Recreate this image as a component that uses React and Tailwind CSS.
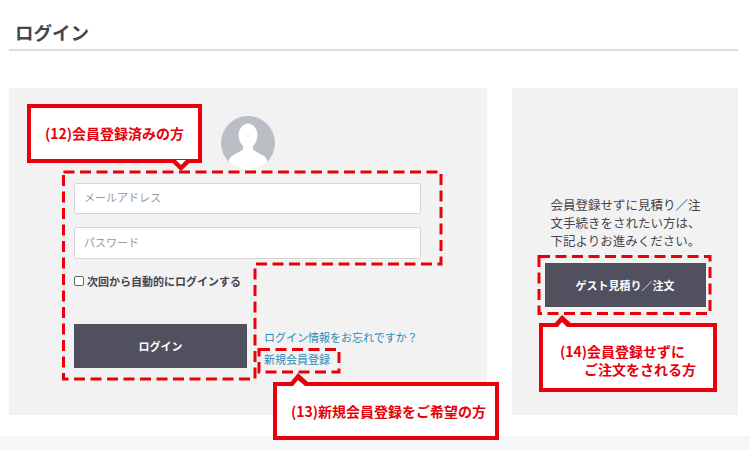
const font = { fontFamily: '"Noto Sans CJK JP", "Noto Sans", sans-serif' };

function Callout({ className, children }) {
  return (
    <div className={`absolute flex flex-col justify-center border-[4px] border-[#e8000b] bg-white text-[14px] font-bold text-[#e8000b] ${className}`}>
      {children}
    </div>
  );
}

export default function App() {
  return (
    <div className="relative h-[450px] w-[750px] overflow-hidden bg-white" style={font}>
      <div className="ml-[9px] flex h-[51px] w-[729px] items-end border-b-2 border-[#dddddd] pb-[4px] pl-[6px]">
        <h1 className="text-[18.5px] leading-[26px] font-bold text-[#45454f]">ログイン</h1>
      </div>

      <div className="mx-[9px] mt-[37px] flex h-[327px] gap-[25px]">
        <div className="flex w-[478px] flex-col bg-[#f2f2f2] pt-[28px] pl-[65px]">
          <div className="ml-[147px] flex h-[54px] w-[54px] items-center justify-center overflow-hidden rounded-full bg-[#b9bec5]">
            <svg viewBox="0 0 54 54" className="h-[54px] w-[54px]">
              <ellipse cx="27" cy="19.5" rx="9.500" ry="12" fill="#fff" />
              <path d="M22 28h10v5c2 3 7 4 11 7 3 2 4 5 4 14H7c0-9 1-12 4-14 4-3 9-4 11-7z" fill="#fff" />
            </svg>
          </div>
          <input readOnly placeholder="メールアドレス" className="mt-[13px] h-[31px] w-[347px] rounded-[3px] border border-[#d4d4d4] bg-white px-[9px] pb-[3px] text-[11px] outline-none placeholder:text-[#999999]" />
          <input readOnly placeholder="パスワード" className="mt-[13px] h-[32px] w-[347px] rounded-[3px] border border-[#d4d4d4] bg-white px-[9px] pb-[3px] text-[11px] outline-none placeholder:text-[#999999]" />
          <label className="mt-[12px] flex h-[20px] items-center gap-[3px] text-[11px] font-bold text-[#45454f]">
            <span className="h-[10px] w-[10px] rounded-[2px] border border-[#666666] bg-white" />
            次回から自動的にログインする
          </label>
          <div className="mt-[33px] flex items-end gap-[17px]">
            <button className="flex h-[44px] w-[173px] items-center justify-center bg-[#51505f] text-[11px] font-bold text-white">ログイン</button>
            <div className="flex flex-col gap-[4px] text-[11px] leading-[18px] text-[#2b8bb8]">
              <span>ログイン情報をお忘れですか？</span>
              <span>新規会員登録</span>
            </div>
          </div>
        </div>

        <div className="flex w-[226px] flex-col items-center bg-[#f2f2f2] pt-[108px]">
          <p className="w-[151px] translate-x-[1px] text-[12.5px] leading-[18px] text-[#45454f]">
            会員登録せずに見積り／注文手続きをされたい方は、下記よりお進みください。
          </p>
          <button className="mt-[13px] flex h-[44px] w-[161px] items-center justify-center bg-[#51505f] text-[11px] font-bold text-white">ゲスト見積り／注文</button>
        </div>
      </div>

      <div className="mt-[21px] h-[14px] bg-[#f4f6f7]" />

      <svg className="pointer-events-none absolute top-0 left-0" width="750" height="450" fill="none" stroke="#e8000b" strokeWidth="3" strokeDasharray="11 5.500">
        <path d="M63.5 172H441V264H255V379H63.5Z" />
        <path d="M259 349.5H339V372H259Z" />
        <path d="M539 256.500H710V313.500H539Z" />
      </svg>

      <Callout className="top-[104px] left-[27px] h-[59px] w-[175px] pl-[14px] leading-[23px]">(12)会員登録済みの方</Callout>
      <Callout className="top-[382px] left-[273px] h-[58px] w-[226px] pl-[14px] leading-[23px]">(13)新規会員登録をご希望の方</Callout>
      <Callout className="top-[323px] left-[539px] h-[69px] w-[178px] pt-[4px] pl-[17px] text-[13.8px] leading-[18px]">
        <span>(14)会員登録せずに</span>
        <span className="pl-[24px]">ご注文をされる方</span>
      </Callout>

      <svg className="pointer-events-none absolute top-0 left-0" width="750" height="450">
        <path d="M172 162.500 181 171 190 162.500Z" fill="#e8000b" />
        <path d="M176 160 181 165 186 160Z" fill="#fff" />
        <path d="M289 384 298 373 310 384Z" fill="#e8000b" />
        <path d="M293 386 298 380 305 386Z" fill="#fff" />
        <path d="M553 325 562 315 573 325Z" fill="#e8000b" />
        <path d="M557 328 562 322 568 328Z" fill="#fff" />
      </svg>
    </div>
  );
}
